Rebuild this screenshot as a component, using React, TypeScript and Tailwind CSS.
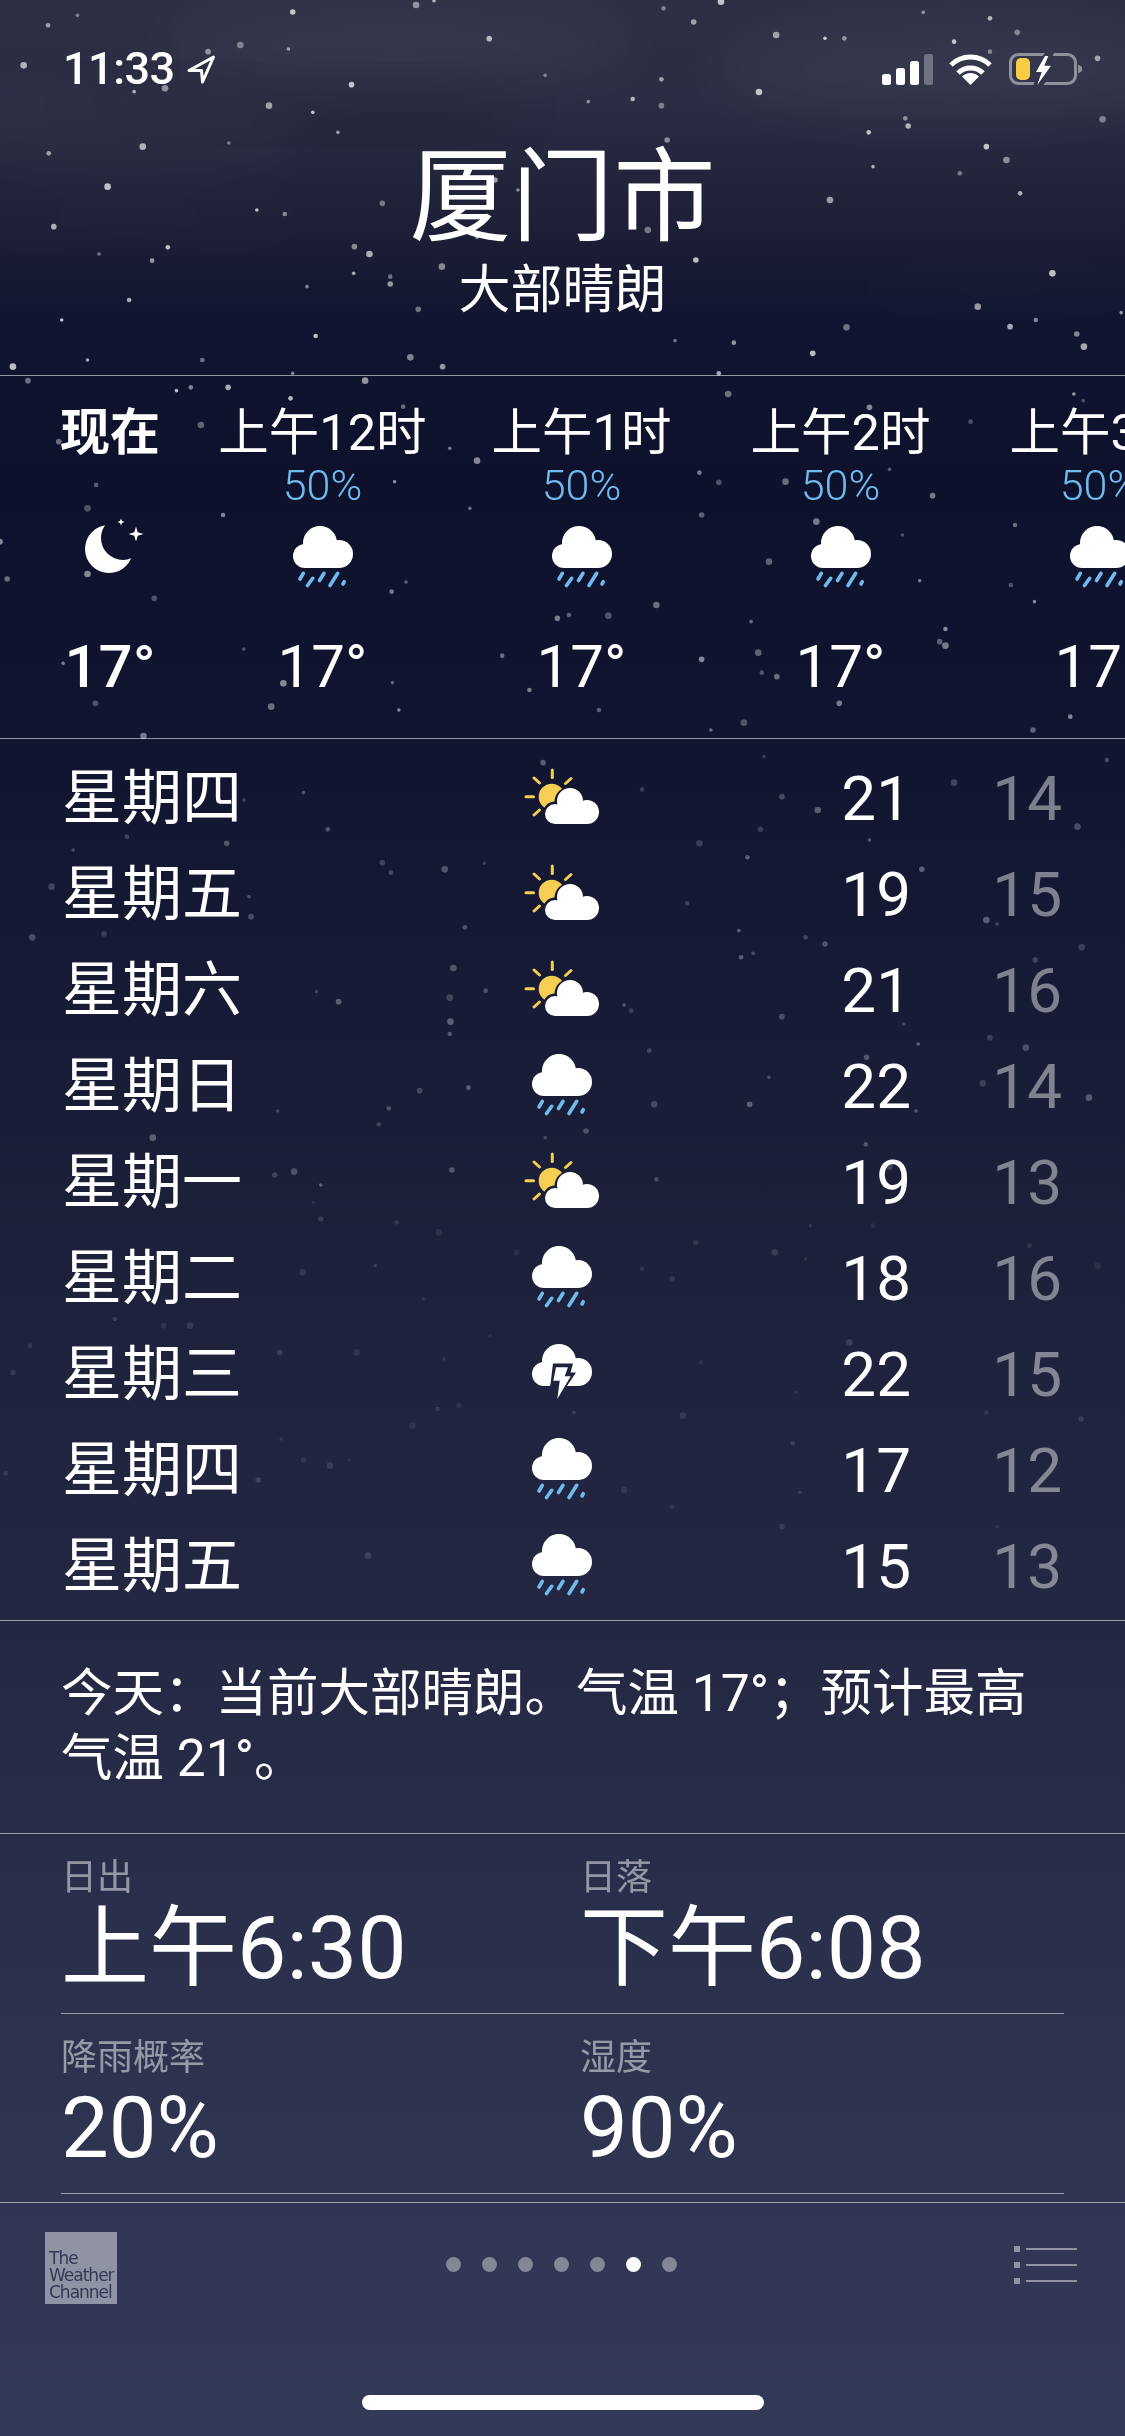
import React from "react";

const S1 = [[108,46],[67,76],[408,36],[580,15],[605,2],[925,25],[967,66],[1005,5],[1287,37],[1380,55],[1418,97],[1082,105],[1150,115],[1177,115],[682,116],[335,135],[402,147],[1330,125],[290,155],[33,196],[760,226],[922,238],[490,254],[230,265],[187,275],[1380,155],[1530,175],[1058,276],[820,305],[882,297],[922,317],[375,317],[436,337],[1262,355],[1266,378],[1537,358],[471,397],[1211,397],[930,420],[199,440],[319,429],[68,460],[1375,440],[1403,480],[1217,500],[1338,520],[690,540],[150,560],[722,570],[1422,580],[533,610],[1157,600],[358,630],[397,642],[75,680],[903,690],[665,712],[234,742],[494,740],[515,762],[138,762],[212,782],[970,780],[616,800],[493,820],[544,830],[544,852],[1467,820],[428,860],[180,900],[583,928],[1363,920],[86,960],[1444,960],[1408,980],[1180,982],[1563,938],[440,1008],[1501,1002],[1511,1040],[941,1022],[1023,1028],[1133,1060],[572,1072],[122,1080],[282,1080],[617,1100],[18,1100],[408,1120],[1002,1120],[39,1142],[509,1142],[246,1172],[266,1162],[318,1162],[1015,1182],[1497,1182],[405,1195]];
const S2 = [[1510,92],[562,110],[1212,112],[280,165],[627,235],[1353,155],[82,215],[665,272],[1240,298],[975,308],[1002,337],[1095,335],[550,335],[134,345],[1300,377],[122,415],[655,415],[311,435],[978,435],[1138,455],[1258,495],[1415,465],[0,515],[1072,575],[1282,632],[1409,645],[10,627],[122,612],[566,636],[546,665],[215,685],[915,705],[1442,695],[793,735],[777,745],[848,737],[1047,755],[1318,777],[1310,815],[1318,827],[340,837],[700,857],[978,868],[1057,848],[88,880],[1062,908],[1083,920],[395,940],[547,938],[738,960],[133,1000],[378,1010],[556,1020],[835,1020],[1170,1000],[1037,1058],[991,1080],[1492,1040],[1440,1080],[200,1098]];
const S3 = [[1065,50],[1543,60],[757,68],[1330,128],[423,158],[895,148],[1090,170],[1140,210],[340,180],[457,268],[1060,268],[1502,260],[1212,300],[177,290],[316,310],[975,310],[102,330],[1042,352],[533,368],[620,388],[675,370],[545,398],[1285,388],[72,440],[347,470],[958,490],[350,530],[1375,540],[1390,552],[648,562],[145,582],[45,592],[1030,572],[1123,592],[1150,612],[1508,622],[1050,640],[1033,652],[1443,660],[632,684],[441,755],[677,752],[472,785],[627,773],[870,795],[880,812],[1090,830],[628,845],[1260,852],[627,882],[1380,893],[1430,923],[1280,912],[905,932],[1208,952],[1370,1030],[1072,1012],[653,1043],[585,1052],[1518,1073],[387,1113],[542,1105],[1045,1093],[912,1093],[1277,1113],[528,1153],[817,1173],[213,1193],[760,1193],[1207,1213],[383,1305],[410,1295],[447,1335],[915,1318],[630,1290],[1240,1280]];
const S4 = [[437,37],[553,97],[447,87],[612,127],[1130,107],[1217,107],[970,157],[1080,187],[1123,207],[1435,167],[720,187],[422,247],[523,227],[895,237],[937,267],[1530,227],[590,327],[160,387],[228,407],[265,407],[683,437],[42,467],[390,487],[497,487],[619,507],[977,517],[18,547],[1184,457],[1110,607],[610,657],[640,647],[952,677],[800,667],[1375,667],[1507,687],[575,707],[392,747],[1105,760],[423,810],[460,827],[487,810],[8,850],[360,870],[870,900],[1115,907],[937,950],[1090,1010],[513,1097],[1390,1010]];

function Sky() {
  const groups: [number[][], number, number][] = [[S1, 0, 0.72], [S2, 370, 0.5], [S3, 740, 0.3], [S4, 1190, 0.13]];
  return (
    <svg className="absolute top-0 left-0 pointer-events-none" width="1125" height="2436" viewBox="0 0 1125 2436">
      <defs>
        <filter id="soft" x="-50%" y="-50%" width="200%" height="200%"><feGaussianBlur stdDeviation="28" /></filter>
        <filter id="dot" x="-100%" y="-100%" width="300%" height="300%"><feGaussianBlur stdDeviation="0.7" /></filter>
      </defs>
      <g filter="url(#soft)" fill="#ffffff">
        <ellipse cx="400" cy="45" rx="240" ry="36" opacity="0.05" />
        <ellipse cx="950" cy="70" rx="240" ry="46" opacity="0.05" />
        <ellipse cx="120" cy="130" rx="200" ry="36" opacity="0.03" />
        <ellipse cx="130" cy="225" rx="210" ry="16" opacity="0.025" />
        <ellipse cx="1000" cy="290" rx="170" ry="16" opacity="0.025" />
      </g>
      <g filter="url(#soft)" fill="#000000">
        <ellipse cx="300" cy="105" rx="220" ry="22" opacity="0.12" />
      </g>
      <g filter="url(#dot)" fill="#ffffff">
        {groups.map(([list, off, op]) =>
          list.map(([x, y], i) => (
            <circle key={`${off}-${i}`} cx={x / 1.394} cy={y / 3 + off} r={1.8 + (i % 4) * 0.5} opacity={op * (0.55 + ((i * 7) % 5) * 0.11)} />
          ))
        )}
      </g>
    </svg>
  );
}

const Cloud = () => (
  <>
    <circle cx="27" cy="17" r="17" />
    <circle cx="12" cy="30" r="12" />
    <circle cx="46" cy="28" r="14" />
    <rect x="12" y="20" width="34" height="22" />
  </>
);

function Rain() {
  return (
    <svg width="60" height="62" viewBox="0 0 60 62">
      <g fill="#ffffff"><Cloud /></g>
      <g stroke="#6fbbee" strokeWidth="3.6" strokeLinecap="round">
        <path d="M10.3 47.3 7 53" />
        <path d="M19.7 52.3 14.5 59.5" />
        <path d="M31 47.3 26.5 54.5" />
        <path d="M44.7 47.3 37 59.5" />
        <path d="M51.3 55.7 50 58" />
      </g>
    </svg>
  );
}

function SunCloud() {
  return (
    <svg width="76" height="58" viewBox="0 0 76 58">
      <defs>
        <mask id="sunmask">
          <rect width="76" height="58" fill="#fff" />
          <g fill="#000" stroke="#000" strokeWidth="5">
            <circle cx="46" cy="34" r="13" />
            <circle cx="31" cy="46" r="10" />
            <circle cx="63" cy="44" r="12" />
          </g>
        </mask>
      </defs>
      <circle cx="27.7" cy="28.7" r="13" fill="#f6cf52" mask="url(#sunmask)" />
      <g stroke="#f6cf52" strokeWidth="3" strokeLinecap="round">
        <path d="M28.3 2V9.5" />
        <path d="M47 10.5 41.5 15.5" />
        <path d="M2 28.7H9.5" />
        <path d="M10 10 15.5 15" />
        <path d="M10 47 15.5 42" />
      </g>
      <g fill="#ffffff">
        <circle cx="46" cy="33" r="13" />
        <circle cx="31" cy="46" r="10" />
        <circle cx="63" cy="44" r="12" />
        <rect x="31" y="38" width="32" height="18" />
      </g>
    </svg>
  );
}

function Thunder() {
  return (
    <svg width="60" height="58" viewBox="0 0 60 58">
      <defs>
        <mask id="boltmask">
          <rect width="60" height="58" fill="#fff" />
          <path d="M21 19.5H41L38.5 28.5H44L31 48H16L18.5 40Z" fill="#000" />
        </mask>
      </defs>
      <g fill="#ffffff" mask="url(#boltmask)"><Cloud /></g>
      <path d="M24 23.3H36L32.7 32.3H38.7L25.3 55L27.7 36.7H21.3Z" fill="#ffffff" />
    </svg>
  );
}

function Moon() {
  return (
    <svg width="64" height="60" viewBox="0 0 64 60" className="mb-[20px] overflow-visible">
      <defs>
        <mask id="moonmask">
          <rect width="64" height="60" fill="#fff" />
          <circle cx="45" cy="21" r="22" fill="#000" />
        </mask>
      </defs>
      <circle cx="31" cy="32" r="24" fill="#ffffff" mask="url(#moonmask)" />
      <path d="M58 9.5 59.7 15.3 65.5 17 59.7 18.7 58 24.5 56.3 18.7 50.5 17 56.3 15.3Z" fill="#ffffff" />
      <path d="M43 1.5 44 4 46.5 5 44 6 43 8.5 42 6 39.5 5 42 4Z" fill="#ffffff" />
    </svg>
  );
}

function StatusRight() {
  return (
    <div className="flex items-end">
      <svg width="51" height="31" viewBox="0 0 51 31" className="mr-[15px]">
        <g fill="#ffffff">
          <rect x="0" y="20" width="9" height="11" rx="2.5" />
          <rect x="14" y="14" width="9" height="17" rx="2.5" />
          <rect x="28" y="7" width="9" height="24" rx="2.5" />
          <rect x="42" y="0" width="9" height="31" rx="2.5" opacity="0.3" />
        </g>
      </svg>
      <svg width="45" height="32" viewBox="0 0 45 32" className="mr-[16px]">
        <g fill="none" stroke="#ffffff" strokeWidth="5">
          <path d="M3 12A28 28 0 0 1 42 12" />
          <path d="M10 20A18 18 0 0 1 35 20" />
        </g>
        <path d="M22.5 32 14 23.5A12 12 0 0 1 31 23.5Z" fill="#ffffff" />
      </svg>
      <svg width="73" height="32" viewBox="0 0 73 32">
        <defs>
          <mask id="batmask">
            <rect width="73" height="32" fill="#fff" />
            <path d="M36 0H45L38 16 48 13 33 34H24L28 19H20Z" fill="#000" />
          </mask>
        </defs>
        <rect x="1.5" y="1.5" width="65" height="29" rx="8" fill="none" stroke="#ffffff" strokeOpacity="0.45" strokeWidth="3" mask="url(#batmask)" />
        <path d="M69 11.5 73 14V18L69 20.5Z" fill="#ffffff" fillOpacity="0.45" />
        <rect x="7" y="5" width="14" height="22" rx="5" fill="#f9cd45" />
        <path d="M36 3 27 19H32.7L28.3 32 42 12.7H35.3L39.3 3Z" fill="#ffffff" />
      </svg>
    </div>
  );
}

const hours = [
  { label: "上午12时", temp: "17°" },
  { label: "上午1时", temp: "17°" },
  { label: "上午2时", temp: "17°" },
  { label: "上午3时", temp: "17°" },
];

const days: [string, "sun" | "rain" | "bolt", number, number][] = [
  ["星期四", "sun", 21, 14],
  ["星期五", "sun", 19, 15],
  ["星期六", "sun", 21, 16],
  ["星期日", "rain", 22, 14],
  ["星期一", "sun", 19, 13],
  ["星期二", "rain", 18, 16],
  ["星期三", "bolt", 22, 15],
  ["星期四", "rain", 17, 12],
  ["星期五", "rain", 15, 13],
];

function Detail({ label, value, size }: { label: string; value: string; size: "time" | "pct" }) {
  return (
    <div className="flex flex-col">
      <div className="text-[36px] leading-[44px] font-normal text-white/50">{label}</div>
      <div className={size === "time" ? "text-[88px] leading-[96px] font-normal text-white" : "text-[85px] leading-[96px] font-normal text-white"}>{value}</div>
    </div>
  );
}

export default function App() {
  return (
    <div className="relative w-[1125px] h-[2436px] overflow-hidden text-white font-['Roboto','Noto_Sans_CJK_SC',sans-serif] bg-[linear-gradient(180deg,#2d3044_0px,#2a2d43_100px,#1f2238_200px,#12152f_320px,#0e112c_480px,#111530_750px,#1b1f38_1190px,#242843_1640px,#2e3350_2100px,#333a57_2436px)]">
      <Sky />
      <div className="relative flex flex-col">
        <div className="flex justify-between items-center h-[44px] mt-[47px] pl-[63px] pr-[43px]">
          <div className="flex items-center">
            <span className="text-[45px] leading-[44px] font-medium tracking-[-0.5px]">11:33</span>
            <svg width="30" height="29" viewBox="0 0 30 29" className="ml-[11px]">
              <path d="M27.5 2 3 15.5H15.5L16.5 27Z" fill="none" stroke="#ffffff" strokeWidth="3" strokeLinejoin="round" />
            </svg>
          </div>
          <StatusRight />
        </div>

        <div className="mt-[47px] text-center text-[102px] leading-[120px] font-normal">厦门市</div>
        <div className="text-center text-[52px] leading-[66px] font-normal">大部晴朗</div>

        <div className="mt-[51px] h-[364px] border-y border-white/55 overflow-hidden flex">
          <div className="shrink-0 w-[193px] pl-[27px] flex flex-col items-center">
            <div className="mt-[27px] h-[60px] text-[50px] leading-[60px] font-bold">现在</div>
            <div className="h-[45px]" />
            <div className="h-[98px] flex items-center justify-center"><Moon /></div>
            <div className="mt-[26px] h-[70px] text-[60px] leading-[70px] font-medium">17°</div>
          </div>
          {hours.map((h) => (
            <div key={h.label} className="shrink-0 w-[259px] flex flex-col items-center">
              <div className="mt-[27px] h-[60px] text-[50.5px] leading-[60px] font-normal">{h.label}</div>
              <div className="h-[45px] text-[43px] leading-[45px] font-light text-[#6fbbee]">50%</div>
              <div className="h-[98px] flex items-center justify-center"><Rain /></div>
              <div className="mt-[26px] h-[70px] text-[60px] leading-[70px] font-normal">{h.temp}</div>
            </div>
          ))}
        </div>

        <div className="pt-[10px] pb-[7px] border-b border-white/55">
          {days.map(([name, icon, hi, lo], i) => (
            <div key={i} className="flex items-center h-[96px] pl-[62px] pr-[63px]">
              <div className="w-[450px] mt-[4px] text-[60px] leading-[72px] font-normal">{name}</div>
              <div className="w-[100px] flex justify-center">
                {icon === "sun" ? <SunCloud /> : icon === "rain" ? <Rain /> : <Thunder />}
              </div>
              <div className="w-[299px] mt-[3px] text-right text-[62px] leading-[72px] font-normal">{hi}</div>
              <div className="flex-1 mt-[3px] text-right text-[62px] leading-[72px] font-normal text-white/45">{lo}</div>
            </div>
          ))}
        </div>

        <div className="h-[213px] pt-[40px] pl-[61px] border-b border-white/55 text-[51.5px] leading-[65px] font-normal">
          今天：当前大部晴朗。气温 17°；预计最高
          <br />
          气温 21°。
        </div>

        <div className="pt-[22px] pl-[61px] pr-[61px]">
          <div className="grid grid-cols-[519px_1fr] pb-[17px] border-b border-white/50">
            <Detail label="日出" value="上午6:30" size="time" />
            <Detail label="日落" value="下午6:08" size="time" />
          </div>
          <div className="grid grid-cols-[519px_1fr] pt-[22px] pb-[17px] border-b border-white/50">
            <Detail label="降雨概率" value="20%" size="pct" />
            <Detail label="湿度" value="90%" size="pct" />
          </div>
        </div>

        <div className="mt-[8px] border-t border-white/55 pt-[29px] pl-[45px] pr-[48px] grid grid-cols-[1fr_auto_1fr] items-start">
          <div className="w-[72px] h-[72px] bg-[#8f93a3] pt-[18px] pl-[4px] text-[#323957] text-[17px] leading-[17px] font-['DejaVu_Sans',sans-serif] tracking-[-1px]">
            The<br />Weather<br />Channel
          </div>
          <div className="flex gap-[21px] mt-[25px]">
            {[0, 1, 2, 3, 4, 5, 6].map((i) => (
              <div key={i} className={i === 5 ? "w-[15px] h-[15px] rounded-full bg-white" : "w-[15px] h-[15px] rounded-full bg-white/40"} />
            ))}
          </div>
          <div className="flex justify-end mt-[14px]">
            <svg width="63" height="42" viewBox="0 0 63 42">
              <g fill="#8f93a3">
                <rect x="0" y="0" width="6" height="6" /><rect x="12" y="2" width="51" height="2" />
                <rect x="0" y="16" width="6" height="6" /><rect x="12" y="18" width="51" height="2" />
                <rect x="0" y="32" width="6" height="6" /><rect x="12" y="34" width="51" height="2" />
              </g>
            </svg>
          </div>
        </div>

        <div className="flex justify-center mt-[91px]">
          <div className="w-[402px] h-[15px] rounded-full bg-white" />
        </div>
      </div>
    </div>
  );
}
